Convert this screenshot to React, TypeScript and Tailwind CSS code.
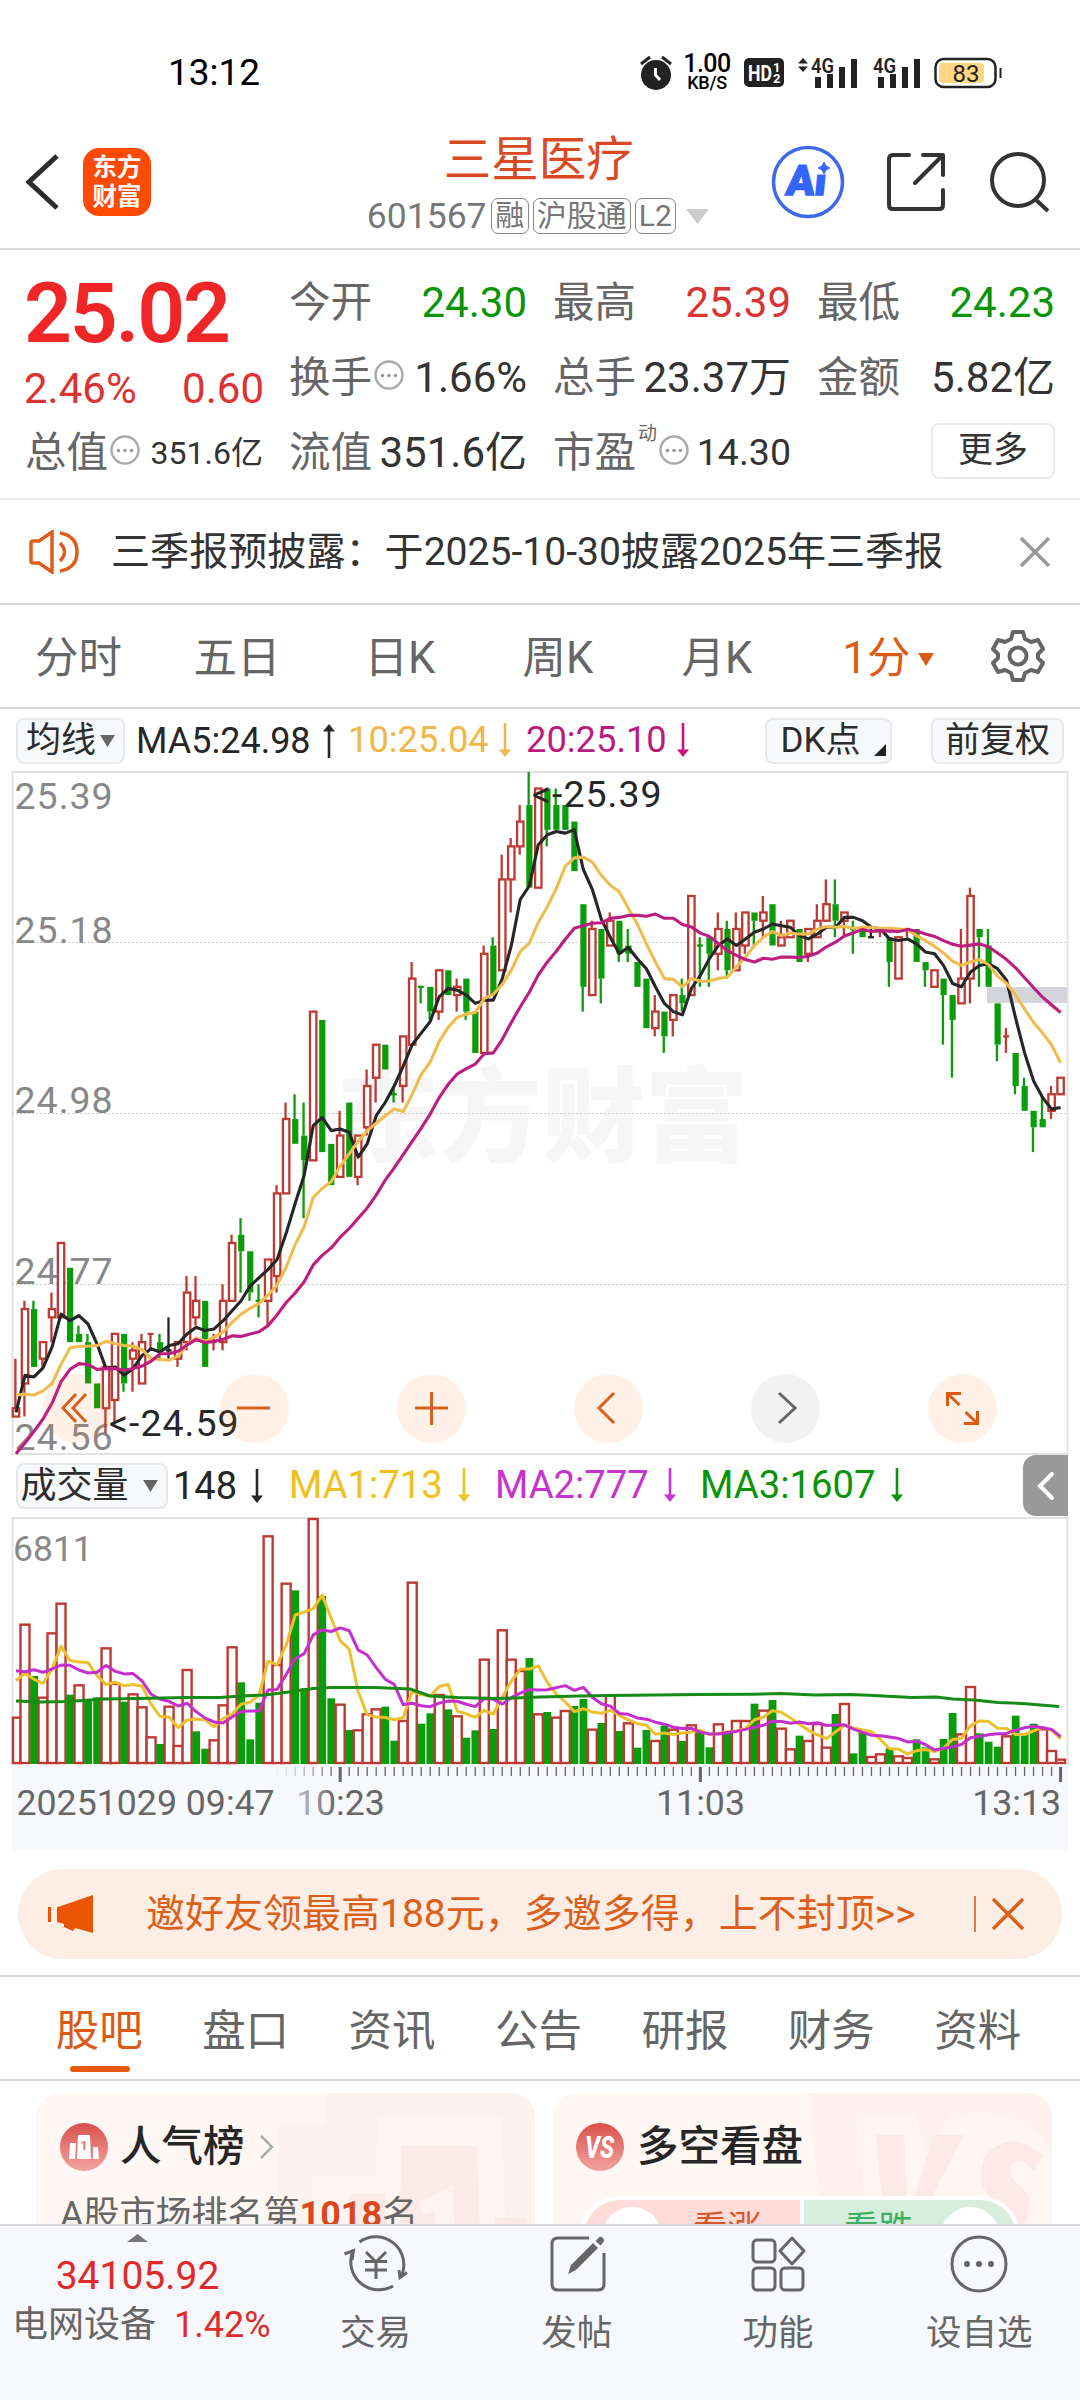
import type { ReactNode } from "react"

type Candle = [string, number, number, number, number]

// Velas: color, máximo, techo y base del cuerpo, mínimo (centavos por debajo de 25.39)
const candles: Candle[] = [
  ["r", 71, 77, 78, 78], ["r", 64, 65, 74, 78], ["g", 64, 65, 72, 72], ["r", 69, 69, 71, 72],
  ["r", 63, 65, 66, 69], ["r", 57, 57, 66, 66], ["g", 60, 60, 69, 69], ["g", 67, 68, 69, 69],
  ["g", 68, 69, 74, 74], ["g", 74, 74, 77, 77], ["r", 72, 72, 77, 80], ["r", 68, 68, 76, 79],
  ["g", 68, 68, 74, 75], ["r", 69, 70, 71, 75], ["r", 68, 69, 74, 74], ["r", 68, 68, 68, 70],
  ["g", 68, 69, 70, 71], ["k", 66, 70, 70, 71], ["r", 69, 69, 71, 72], ["r", 61, 63, 69, 70],
  ["r", 61, 64, 66, 67], ["g", 64, 64, 72, 72], ["r", 68, 69, 69, 70], ["r", 62, 64, 69, 70],
  ["r", 56, 57, 64, 64], ["g", 54, 56, 58, 63], ["g", 58, 58, 63, 64], ["g", 62, 64, 64, 66],
  ["r", 59, 59, 64, 67], ["r", 50, 51, 61, 63], ["r", 40, 42, 51, 51], ["g", 39, 42, 45, 45],
  ["g", 40, 44, 47, 54], ["r", 29, 29, 47, 47], ["g", 30, 30, 46, 46], ["g", 45, 45, 50, 50],
  ["r", 41, 44, 49, 49], ["g", 40, 40, 49, 49], ["r", 44, 44, 49, 50], ["r", 36, 38, 43, 44],
  ["r", 33, 33, 37, 40], ["g", 33, 33, 36, 36], ["g", 38, 39, 39, 40], ["r", 32, 32, 38, 40],
  ["r", 23, 25, 33, 33], ["g", 26, 26, 26, 28], ["g", 26, 26, 29, 30], ["r", 24, 24, 29, 30],
  ["g", 24, 24, 27, 27], ["r", 25, 26, 27, 29], ["g", 25, 25, 29, 30], ["g", 29, 29, 34, 34],
  ["r", 21, 22, 34, 34], ["g", 20, 21, 27, 27], ["r", 10, 13, 24, 24], ["r", 8, 9, 13, 17],
  ["r", 4, 6, 9, 10], ["g", 0, 4, 14, 14], ["r", 2, 2, 14, 14], ["g", 2, 2, 7, 9],
  ["g", 2, 4, 7, 7], ["g", 4, 4, 7, 7], ["g", 6, 6, 12, 12], ["g", 16, 16, 26, 29],
  ["r", 18, 19, 27, 27], ["g", 19, 19, 25, 28], ["r", 17, 18, 21, 21], ["g", 18, 18, 22, 23],
  ["g", 19, 21, 22, 23], ["g", 23, 23, 26, 26], ["g", 25, 25, 31, 31], ["r", 27, 29, 31, 32],
  ["g", 29, 29, 32, 34], ["r", 27, 27, 30, 32], ["g", 25, 27, 28, 29], ["r", 15, 15, 27, 27],
  ["g", 20, 21, 21, 26], ["g", 20, 20, 22, 26], ["r", 17, 19, 22, 24], ["g", 18, 19, 24, 25],
  ["r", 17, 19, 24, 24], ["r", 17, 17, 21, 22], ["g", 17, 17, 18, 21], ["r", 15, 17, 18, 20],
  ["g", 16, 16, 21, 21], ["r", 18, 20, 21, 21], ["r", 18, 18, 20, 20], ["g", 19, 19, 23, 23],
  ["r", 19, 19, 22, 23], ["r", 16, 18, 20, 20], ["r", 13, 16, 18, 18], ["g", 13, 16, 18, 20],
  ["r", 17, 17, 18, 20], ["g", 18, 19, 19, 22], ["g", 19, 19, 20, 20], ["k", 19, 20, 20, 20],
  ["r", 19, 19, 19, 20], ["g", 20, 20, 23, 26], ["r", 20, 20, 25, 25], ["r", 19, 19, 19, 20],
  ["g", 19, 19, 23, 23], ["g", 23, 23, 24, 26], ["r", 24, 24, 26, 26], ["g", 25, 25, 27, 33],
  ["g", 27, 27, 30, 37], ["r", 19, 25, 28, 28], ["r", 14, 15, 25, 28], ["g", 19, 19, 20, 26],
  ["g", 19, 21, 26, 26], ["g", 28, 28, 33, 35], ["r", 31, 32, 32, 34], ["g", 34, 34, 38, 39],
  ["g", 37, 38, 41, 41], ["g", 41, 41, 43, 46], ["g", 39, 42, 43, 43], ["r", 38, 39, 41, 42],
  ["r", 37, 37, 39, 39],
]

const volumes = [
  142, 421, 264, 202, 395, 484, 208, 239, 195, 200, 350, 243, 187, 212, 173, 83, 60, 175, 57, 285,
  98, 46, 74, 179, 353, 245, 74, 184, 686, 300, 544, 521, 227, 738, 504, 197, 181, 102, 104, 152,
  167, 172, 70, 132, 547, 121, 152, 210, 164, 146, 79, 101, 316, 105, 404, 316, 282, 318, 152, 156,
  142, 162, 174, 195, 106, 123, 208, 99, 125, 49, 102, 72, 115, 106, 69, 119, 97, 50, 122, 96,
  132, 132, 181, 163, 192, 109, 47, 85, 72, 123, 52, 150, 183, 32, 95, 24, 32, 47, 26, 21,
  74, 50, 17, 75, 153, 92, 234, 92, 67, 52, 86, 145, 92, 121, 107, 42, 16,
]

const closes = candles.map(([c, , top, bottom]) => (c === "g" ? bottom : top))

const px = (i: number) => 16 + 9.005 * i
const priceY = (k: number) => 772 + k * 8.263
const volY = (v: number) => 1764 - v / 3

// Media móvil; los primeros valores vienen dados porque faltan datos previos
function average(data: number[], n: number, head: number[]) {
  return data.map((_, i) =>
    i < head.length ? head[i] : data.slice(i - n + 1, i + 1).reduce((a, b) => a + b, 0) / n
  )
}

const toPoints = (data: number[], y: (v: number) => number) =>
  data.map((v, i) => `${px(i).toFixed(1)},${y(v).toFixed(1)}`).join(" ")

const ma5 = toPoints(average(closes, 5, [77.5, 73, 73.2, 72.1]), priceY)
const ma10 = toPoints(average(closes, 10, [75.4, 75.3, 75.4, 74.9, 74, 71.7, 69.7, 69.5, 69.5]), priceY)
const ma20 = toPoints(
  average(closes, 20, [
    82.5, 81.2, 79.8, 78.3, 76.4, 73.8, 72.3, 71.6, 71.7, 72.3, 72.2, 72.2, 72.4, 72.2, 71.9, 71.3,
    70.4, 70.4, 70.1,
  ]),
  priceY
)
const vol5 = toPoints(average(volumes, 5, [250, 272, 254, 242]), volY)
const vol10 = toPoints(average(volumes, 10, [280, 277, 283, 275, 285, 297, 296, 282, 273]), volY)
const vol60 =
  "16,1701 41,1702 69,1701.5 103,1699 138,1698.5 186,1697.5 220,1697.5 241,1696 265,1695 289,1692 313,1688.5 331,1687.5 375,1687.5 410,1689 430,1696 458,1697.5 499,1698.5 540,1697 581,1696 609,1695.5 698,1694.5 753,1694.3 781,1693.6 815,1695 850,1694.5 874,1695.5 912,1697.5 936,1697 953,1699 974,1700 998,1702.5 1022,1703.5 1059,1706.5"

const colors: Record<string, string> = { r: "#bd3934", g: "#0a9c0a", k: "#262626" }

function InfoDots() {
  return (
    <svg width="30" height="30" viewBox="0 0 30 30" className="shrink-0 -mt-1.5" fill="none">
      <circle cx="15" cy="15" r="13.5" stroke="#aaa" strokeWidth="2.4" />
      <g fill="#999">
        <circle cx="8.5" cy="15.5" r="1.8" />
        <circle cx="15" cy="15.5" r="1.8" />
        <circle cx="21.5" cy="15.5" r="1.8" />
      </g>
    </svg>
  )
}

function Arrow({ up, color }: { up?: boolean; color: string }) {
  return (
    <svg width="12" height="34" viewBox="0 0 12 34" className={up ? "shrink-0" : "shrink-0 rotate-180"}>
      <path d="M6 4V34" stroke={color} strokeWidth="2.6" />
      <path d="M6 0L12 7.500H0Z" fill={color} />
    </svg>
  )
}

function Triangle({ w, h, color, up }: { w: number; h: number; color: string; up?: boolean }) {
  return (
    <svg width={w} height={h} viewBox="0 0 10 10" preserveAspectRatio="none" className="shrink-0">
      <path d={up ? "M5 0L10 10H0Z" : "M0 0H10L5 10Z"} fill={color} />
    </svg>
  )
}

function StatusBar() {
  return (
    <div className="flex h-[120px] items-center pt-[25px] pl-[168px] text-black">
      <span className="w-[472px] text-[37px] font-[450]">13:12</span>
      <svg width="32" height="36" viewBox="0 0 32 36" fill="none">
        <circle cx="16" cy="20" r="15" fill="#222" />
        <path d="M1 9L10 2M31 9L22 2" stroke="#222" strokeWidth="3" />
        <path d="M15.500 13V20L20 25" stroke="#fff" strokeWidth="3" />
      </svg>
      <div className="ml-3 flex w-[46px] flex-col items-center">
        <span className="text-[25px] leading-[21px] font-medium tracking-[-0.5px]">1.00</span>
        <span className="text-[18px] leading-[18px] font-medium tracking-[-0.3px]">KB/S</span>
      </div>
      <svg width="40" height="29" viewBox="0 0 40 29" className="ml-[14px]" fill="#fff">
        <rect width="40" height="29" rx="5" fill="#222" />
        <text x="4" y="22.500" fontSize="22" fontWeight="700" textLength="24" lengthAdjust="spacingAndGlyphs">HD</text>
        <text x="29" y="13.500" fontSize="13" fontWeight="700">1</text>
        <text x="29" y="25" fontSize="13" fontWeight="700">2</text>
      </svg>
      <svg width="62" height="34" viewBox="0 0 62 34" className="ml-[13px] overflow-visible" fill="#222">
        <path d="M6 2L11 7.500H1ZM6 16L11 10.500H1Z" />
        <text x="14" y="16.500" fontSize="21" fontWeight="600" textLength="23" lengthAdjust="spacingAndGlyphs">4G</text>
        <path d="M18 21h6v11h-6zM30 18h6v14h-6zM42 11h6v21h-6zM54 3h6v29h-6z" />
      </svg>
      <svg width="50" height="34" viewBox="0 0 50 34" className="ml-[14px] overflow-visible" fill="#222">
        <text x="0" y="16.500" fontSize="21" fontWeight="600" textLength="23" lengthAdjust="spacingAndGlyphs">4G</text>
        <path d="M5 21h6v11H5zM17 18h6v14h-6zM29 11h6v21h-6zM41 3h6v29h-6z" />
      </svg>
      <svg width="68" height="32" viewBox="0 0 68 32" className="ml-[11px]" fill="none">
        <rect x="1.500" y="2" width="60" height="28" rx="8" stroke="#222" strokeWidth="2.500" />
        <rect x="5" y="6" width="45" height="20" rx="4" fill="#ffd782" />
        <path d="M66.500 11V21" stroke="#222" strokeWidth="2" />
        <text x="32" y="24.500" fontSize="24" textAnchor="middle" fill="#222">83</text>
      </svg>
    </div>
  )
}

function Header() {
  return (
    <div className="flex h-[130px] items-center border-b-2 border-[#d9d9d9] pl-[26px] pr-[29px]">
      <svg width="34" height="56" viewBox="0 0 34 56" className="-mt-1 shrink-0" fill="none">
        <path d="M31 2L3 28L31 54" stroke="#2c2c2c" strokeWidth="5" />
      </svg>
      <div className="ml-[23px] -mt-1 flex size-[68px] flex-col items-center justify-center rounded-[16px] bg-[#ff4a05] text-[24.500px] leading-[29px] font-bold text-white">
        <span>东方</span>
        <span>财富</span>
      </div>
      <div className="ml-[216px] flex w-[344px] flex-col">
        <div className="-mt-[3px] ml-[77px] text-[47.500px] leading-[58px] text-[#da4a22]">三星医疗</div>
        <div className="mt-[9px] flex items-center text-[35.500px] leading-[36px] text-[#777]">
          <span className="w-[124px]">601567</span>
          <span className="flex h-[36px] w-[38px] items-center justify-center rounded-[7px] border-[1.5px] border-[#888] text-[29px]">融</span>
          <span className="ml-1 flex h-[36px] w-[98px] items-center justify-center rounded-[7px] border-[1.5px] border-[#888] text-[30px]">沪股通</span>
          <span className="mr-[10px] ml-1 flex h-[36px] w-[41px] items-center justify-center rounded-[7px] border-[1.5px] border-[#888] text-[30px]">L2</span>
          <Triangle w={23} h={15} color="#ccc" />
        </div>
      </div>
      <svg width="74" height="74" viewBox="0 0 74 74" className="ml-[61px] -mt-1 shrink-0">
        <circle cx="37" cy="37" r="34.500" fill="none" stroke="#3f68e8" strokeWidth="3.500" />
        <g transform="translate(37 50) skewX(-6)">
          <text x="-23" y="0" fontSize="42" fontWeight="900" fill="#3465ff" stroke="#3465ff" strokeWidth="1.500" textLength="40">Ai</text>
        </g>
        <path d="M45 15H60V29.500H45Z" fill="#fff" />
        <path d="M53 17Q54 22 59 23Q54 24 53 29Q52 24 47 23Q52 22 53 17Z" fill="#3465ff" stroke="#3465ff" />
      </svg>
      <svg width="60" height="60" viewBox="0 0 60 60" className="ml-[41px] -mt-1 shrink-0" fill="none" stroke="#333" strokeWidth="4" strokeLinejoin="round" strokeLinecap="round">
        <path d="M23 3H7Q3 3 3 7V53Q3 57 7 57H53Q57 57 57 53V38M37 3H57V23M56 4L29 31" />
      </svg>
      <svg width="62" height="62" viewBox="0 0 62 62" className="ml-[43px] -mt-1 shrink-0" fill="none" stroke="#333" strokeWidth="4">
        <circle cx="29" cy="29" r="26" />
        <path d="M46 48L59 60" />
      </svg>
    </div>
  )
}

function Quote({ label, value, tone = "text-[#333]", info, sup, size = "text-[42px]" }: {
  label: string
  value: string
  tone?: string
  info?: boolean
  sup?: string
  size?: string
}) {
  return (
    <div className="flex h-[75px] items-center justify-between whitespace-nowrap">
      <div className="flex items-center gap-[2px]">
        <span className="text-[41.500px] text-[#666]">{label}</span>
        {sup && <span className="-mt-[38px] text-[19px] text-[#666]">{sup}</span>}
        {info && <InfoDots />}
      </div>
      <span className={`${size} ${tone}`}>{value}</span>
    </div>
  )
}

function Quotes() {
  return (
    <div className="grid h-[250px] grid-cols-4 gap-x-[26px] border-b-2 border-[#ececec] px-[25px] pt-[15px] leading-none">
      <div>
        <div className="-ml-px flex h-[98px] items-center text-[84px] font-semibold tracking-[-2.200px] text-[#f02626]">25.02</div>
        <div className="-mr-px flex h-[52px] items-center justify-between text-[42px] text-[#dc3232]">
          <span className="-ml-px">2.46%</span>
          <span>0.60</span>
        </div>
        <Quote label="总值" value="351.6亿" info size="text-[32px]" />
      </div>
      <div>
        <Quote label="今开" value="24.30" tone="text-[#0a940a]" />
        <Quote label="换手" value="1.66%" info />
        <Quote label="流值" value="351.6亿" />
      </div>
      <div>
        <Quote label="最高" value="25.39" tone="text-[#d83434]" />
        <Quote label="总手" value="23.37万" />
        <Quote label="市盈" value="14.30" sup="动" info size="text-[37.500px]" />
      </div>
      <div>
        <Quote label="最低" value="24.23" tone="text-[#0a940a]" />
        <Quote label="金额" value="5.82亿" />
        <div className="flex h-[72px] items-center justify-end">
          <div className="flex h-[56px] w-[124px] items-center justify-center rounded-[8px] border-2 border-[#ececec] pb-0.5 text-[35px] text-[#333]">
            更多
          </div>
        </div>
      </div>
    </div>
  )
}

function Notice() {
  return (
    <div className="flex h-[105px] items-center border-b-2 border-[#d9d9d9] pl-[29px] leading-none">
      <svg width="52" height="44" viewBox="0 0 52 44" fill="none" stroke="#dc5f1c" strokeWidth="3.500">
        <path d="M2 13Q2 11 4 11H10L23 2V42L10 33H4Q2 33 2 31Z" />
        <path d="M31 13Q40 22 31 31M31 3Q48 6 48 22T31 41" />
      </svg>
      <span className="ml-[30px] flex-1 pt-0.5 text-[39.100px] whitespace-nowrap text-[#333]">三季报预披露：于2025-10-30披露2025年三季报</span>
      <svg width="32" height="32" viewBox="0 0 32 32" className="mr-[29px]" stroke="#999" strokeWidth="3.500">
        <path d="M2 2L30 30M30 2L2 30" />
      </svg>
    </div>
  )
}

const periods = [
  { label: "分时", width: "w-[157px]" },
  { label: "五日", width: "w-[160px]" },
  { label: "日K",  width: "w-[166px]" },
  { label: "周K",  width: "w-[150px]" },
  { label: "月K",  width: "w-[168px]" },
]

function Periods() {
  return (
    <div className="flex h-[104px] items-center border-b-2 border-[#d9d9d9] text-[43.500px] leading-none text-[#666]">
      {periods.map(({ label, width }) => (
        <div key={label} className={`${width} pt-1.5 text-center`}>{label}</div>
      ))}
      <div className="flex w-[175px] items-center justify-center gap-2 pt-1.5 text-[#dc5a14]">
        1分
        <Triangle w={16} h={13} color="#dc5a14" />
      </div>
      <svg width="54" height="54" viewBox="0 0 54 54" className="ml-[15px]" fill="none" stroke="#666" strokeWidth="4">
        <path d="M22 3H32L34 10L40 13L47 11L52 20L47 25V29L52 34L47 43L40 41L34 44L32 51H22L20 44L14 41L7 43L2 34L7 29V25L2 20L7 11L14 13L20 10Z" strokeLinejoin="round" />
        <circle cx="27" cy="27" r="8.500" />
      </svg>
    </div>
  )
}

function Pill({ children, className }: { children: ReactNode; className: string }) {
  return (
    <div className={`flex h-[46px] shrink-0 items-center justify-center rounded-[8px] border-2 border-[#e6e8ec] bg-[#f7f8fa] text-[35px] text-[#2c2c2c] ${className}`}>
      {children}
    </div>
  )
}

function AverageBar() {
  return (
    <div className="flex h-[63px] items-center pr-4 pl-4 text-[36px] leading-none whitespace-nowrap">
      <Pill className="w-[109px] gap-1">
        均线
        <Triangle w={15} h={12} color="#666" />
      </Pill>
      <div className="ml-[11px] flex w-[197px] items-center gap-[12px] text-[#262626]">
        MA5:24.98 <Arrow up color="#262626" />
      </div>
      <div className="ml-[15px] flex w-[164px] items-center gap-[10px] text-[36.300px] text-[#f0b848]">
        10:25.04 <Arrow color="#f0b848" />
      </div>
      <div className="ml-[14px] flex items-center gap-[10px] text-[36.300px] text-[#b81c80]">
        20:25.10 <Arrow color="#c8147c" />
      </div>
      <Pill className="relative ml-auto w-[127px] pr-4">
        DK点
        <svg width="12" height="12" viewBox="0 0 12 12" className="absolute right-1 bottom-1.5">
          <path d="M12 0V12H0Z" fill="#222" />
        </svg>
      </Pill>
      <Pill className="ml-[39px] w-[133px]">前复权</Pill>
    </div>
  )
}

function CandleShape({ candle, i }: { candle: Candle; i: number }) {
  const [c, high, top, bottom, low] = candle
  const x = px(i)
  const color = colors[c]
  return (
    <g stroke={color} strokeWidth="2.300">
      {high < top && <path d={`M${x - 0.6} ${priceY(high)}V${priceY(top)}`} />}
      {low > bottom && <path d={`M${x - 0.6} ${priceY(bottom)}V${priceY(low)}`} />}
      {top === bottom ? (
        <path d={`M${x - 3.500} ${priceY(top)}H${x + 2.500}`} />
      ) : c === "g" ? (
        <rect x={x - 3} y={priceY(top)} width="6.200" height={priceY(bottom) - priceY(top)} fill={color} stroke="none" />
      ) : (
        <rect x={x - 3.200} y={priceY(top)} width="6.400" height={priceY(bottom) - priceY(top)} fill="#fff" />
      )}
    </g>
  )
}

const controls = [
  { id: "first",  bg: "bg-[#ff6a1a]/10", stroke: "#d6601e", d: "M33 20L20 34L33 48M43 20L30 34L43 48" },
  { id: "minus",  bg: "bg-[#ff6a1a]/10", stroke: "#d6601e", d: "M17 34H50" },
  { id: "plus",   bg: "bg-[#ff6a1a]/10", stroke: "#d6601e", d: "M18 34H51M34.500 18V51" },
  { id: "prev",   bg: "bg-[#ff6a1a]/10", stroke: "#d6601e", d: "M40 19L25 34L40 49" },
  { id: "next",   bg: "bg-[#f2f2f2]",    stroke: "#666",    d: "M28 19L44 34L28 49" },
  { id: "expand", bg: "bg-[#ff6a1a]/10", stroke: "#dc5a14", d: "M19.500 32V19.500H33M19.500 19.500L31.500 31M49.500 37V49.500H36M49.500 49.500L37.500 38" },
]

function PriceChart() {
  return (
    <div className="relative h-[682px]">
      <svg width="1080" height="682" viewBox="0 772 1080 682" fill="none" className="overflow-visible">
        <text x="336" y="1154" fontSize="103" fontWeight="900" fill="#f6f6f6">东方财富</text>
        <rect x="12.500" y="772" width="1055" height="682" stroke="#e2e2e2" strokeWidth="2" />
        {[942.5, 1113.5, 1284.5].map((y) => (
          <path key={y} d={`M12 ${y}H1068`} stroke="#ccc" strokeDasharray="2 2" />
        ))}
        <rect x="987" y="987" width="80" height="16" fill="#d4d6dc" />
        <g fill="#888" fontSize="37.500" letterSpacing="1">
          <text x="14.500" y="809">25.39</text>
          <text x="14.500" y="942.500">25.18</text>
          <text x="14.500" y="1112.500">24.98</text>
          <text x="14.500" y="1283.500">24.77</text>
          <text x="14.500" y="1450">24.56</text>
        </g>
        {candles.map((candle, i) => (
          <CandleShape key={i} candle={candle} i={i} />
        ))}
        <g strokeWidth="3.100" strokeLinejoin="round">
          <polyline points={ma5} stroke="#262626" />
          <polyline points={ma10} stroke="#f0bc50" />
          <polyline points={ma20} stroke="#bd1c80" />
        </g>
        <g fill="#262626" fontSize="37.500" letterSpacing="1">
          <text x="532" y="807">&lt;-25.39</text>
          <text x="109" y="1436">&lt;-24.59</text>
        </g>
      </svg>
      <div className="absolute top-[602px] left-[43px] flex gap-[108px]">
        {controls.map(({ id, bg, stroke, d }) => (
          <div key={id} className={`size-[69px] rounded-full ${bg}`}>
            <svg width="69" height="69" viewBox="0 0 69 69" fill="none">
              <path d={d} stroke={stroke} strokeWidth="3" />
            </svg>
          </div>
        ))}
      </div>
    </div>
  )
}

function VolumeBar() {
  return (
    <div className="flex h-[63px] items-center pr-[12px] pl-[16px] text-[38px] leading-none whitespace-nowrap">
      <Pill className="w-[152px] gap-[14px] pr-1.5 text-[36px]">
        成交量
        <Triangle w={15} h={12} color="#666" />
      </Pill>
      <div className="ml-[5px] flex w-[116px] items-center gap-[14px] text-[#262626]">
        148 <Arrow color="#262626" />
      </div>
      <div className="flex w-[206px] items-center gap-[15px] text-[38.200px] text-[#f0c01c]">
        MA1:713 <Arrow color="#f0c01c" />
      </div>
      <div className="flex w-[205px] items-center gap-[15px] text-[38.200px] text-[#c832d0]">
        MA2:777 <Arrow color="#c832d0" />
      </div>
      <div className="flex items-center gap-[15px] text-[38.300px] text-[#0a940a]">
        MA3:1607 <Arrow color="#0a940a" />
      </div>
      <div className="ml-auto flex h-[61px] w-[45px] items-center justify-center rounded-l-[13px] bg-[#999]">
        <svg width="18" height="30" viewBox="0 0 18 30" fill="none">
          <path d="M15 3L3 15L15 27" stroke="#fff" strokeWidth="4" strokeLinecap="round" />
        </svg>
      </div>
    </div>
  )
}

function VolumeChart() {
  return (
    <svg width="1080" height="334" viewBox="0 1517 1080 334" fill="none" className="block">
      <defs>
        <linearGradient id="axis-fade" x1="0" x2="1" y1="0" y2="0">
          <stop offset="0" stopColor="#f7f8fb" />
          <stop offset="1" stopColor="#f7f8fb" stopOpacity="0" />
        </linearGradient>
      </defs>
      <path d="M12.500 1765V1518H1067.500V1765" stroke="#e2e2e2" strokeWidth="2" />
      <rect x="12" y="1765" width="1056" height="86" fill="#f7f8fb" />
      <text x="13" y="1561" fontSize="35.500" fill="#888">6811</text>
      {volumes.map((v, i) => {
        const up = i === 0 || closes[i] <= closes[i - 1]
        return up ? (
          <rect key={i} x={px(i) - (i ? 4.5 : 3)} y={volY(v) + 1} width={i ? 9 : 7.500} height={v / 3 - 2} fill="#fff" stroke={colors.r} strokeWidth="2.400" />
        ) : (
          <rect key={i} x={px(i) - 3.800} y={volY(v)} width="7.800" height={v / 3} fill={colors.g} />
        )
      })}
      <g strokeWidth="3" strokeLinejoin="round">
        <polyline points={vol5} stroke="#ecc12e" />
        <polyline points={vol10} stroke="#c52fcd" />
        <polyline points={vol60} stroke="#168c16" />
      </g>
      {volumes.map((_, i) => {
        const major = i === 36 || i === 76 || i === 116
        return i > 28 && (
          <path key={i} d={`M${px(i)} 1767V${major ? 1782 : 1776}`} stroke="#666" strokeWidth={major ? 3 : 1.300} />
        )
      })}
      <g fill="#666" fontSize="35.700">
        <text x="296" y="1815">10:23</text>
        <rect x="274" y="1766" width="62" height="60" fill="url(#axis-fade)" />
        <text x="16.500" y="1815">20251029 09:47</text>
        <text x="700.500" y="1815" textAnchor="middle">11:03</text>
        <text x="1061" y="1815" textAnchor="end">13:13</text>
      </g>
    </svg>
  )
}

function Promo() {
  return (
    <div className="mx-[18px] mt-[18px] flex h-[90px] items-center rounded-full bg-[#fceee5] pl-[30px] leading-none text-[#dc5f1c]">
      <svg width="46" height="40" viewBox="0 0 46 40" fill="#ea5504">
        <path d="M0 13H3V28H0ZM10 13L45 1V39L27 34L25 37L16 33V30L9 28V13Z" />
      </svg>
      <span className="ml-[52px] text-[39px] whitespace-nowrap">邀好友领最高188元，多邀多得，上不封顶&gt;&gt;</span>
      <span className="ml-auto h-[36px] w-[2px] bg-[#dc7a44]" />
      <svg width="32" height="32" viewBox="0 0 32 32" className="mr-[38px] ml-[16px]" stroke="#dc5f1c" strokeWidth="3.400">
        <path d="M1 1L31 31M31 1L1 31" />
      </svg>
    </div>
  )
}

const tabs = ["股吧", "盘口", "资讯", "公告", "研报", "财务", "资料"]

function Tabs() {
  return (
    <div className="mt-[16px] grid h-[106px] grid-cols-7 border-y-2 border-[#d9d9d9] pr-[29px] pl-[26px] text-[43.500px] leading-none text-[#666]">
      {tabs.map((tab, i) => (
        <div key={tab} className={`flex flex-col items-center pt-[33px] ${i === 0 ? "text-[#dc5a14]" : ""}`}>
          {tab}
          {i === 0 && <span className="mt-[12px] ml-0.5 h-[6px] w-[60px] rounded-full bg-[#e65a0a]" />}
        </div>
      ))}
    </div>
  )
}

function Cards() {
  return (
    <div className="flex h-[143px] gap-[18px] overflow-hidden px-[36px] pt-[12px] leading-none">
      <div className="relative h-[220px] w-[499px] shrink-0 overflow-hidden rounded-[24px] bg-[#fff7f4] px-[24px] pt-[30px]">
        <svg width="257" height="220" viewBox="-27 0 257 220" className="absolute top-0 right-0">
          <path d="M21 0H230V220H-26V31H21Z" fill="#fef2ef" />
          <path d="M74 24H196L204 220H8V82H70Z" fill="#fff6f3" />
          <path d="M96 53H172L178 220H94ZM45 101H80V220H43ZM190 125H222V220H190Z" fill="#fceae7" />
          <path d="M116 108L148 92L152 220H130V118L116 122Z" fill="#fff4f1" />
        </svg>
        <div className="relative flex items-center">
          <svg width="48" height="48" viewBox="0 0 48 48">
            <defs>
              <linearGradient id="badge" x1="0" x2="0" y1="0" y2="1">
                <stop offset="0" stopColor="#d94f4c" />
                <stop offset="1" stopColor="#f2a59d" />
              </linearGradient>
            </defs>
            <circle cx="24" cy="24" r="24" fill="url(#badge)" />
            <path d="M10 20H16L15 36H9ZM18 12H30L31 36H17ZM33 24H38L39 36H33Z" fill="#fff" />
            <text x="24" y="27" fontSize="13" fontWeight="700" textAnchor="middle" fill="#e07570">1</text>
          </svg>
          <span className="ml-[12px] text-[41.500px] font-medium text-[#262626]">人气榜</span>
          <svg width="14" height="24" viewBox="0 0 14 24" className="ml-[15px]" fill="none">
            <path d="M1 1L12 12L1 23" stroke="#aaa" strokeWidth="2.500" />
          </svg>
        </div>
        <div className="relative mt-[26px] text-[36px] whitespace-nowrap text-[#666]">
          A股市场排名第<span className="font-bold text-[#d9481c]">1018</span>名
        </div>
      </div>
      <div className="relative h-[220px] w-[499px] shrink-0 overflow-hidden rounded-[24px] bg-[#fff7f4] px-[23px] pt-[30px]">
        <svg width="246" height="220" viewBox="0 0 246 220" className="absolute top-0 right-0">
          <path d="M3 0H246V220H24Z" fill="#fef1ee" />
          <path d="M50 22H110L120 60L145 22Q225 10 246 60V220H70Z" fill="#fff5f2" />
          <path d="M70 42H98L102 125L128 42H158L112 130H78ZM236 62Q205 35 180 62Q165 92 192 110Q205 125 190 130H150L145 150H200Q230 130 222 100Q200 85 205 72Q215 62 228 78Z" fill="#fde9e6" />
        </svg>
        <div className="relative flex items-center">
          <svg width="48" height="48" viewBox="0 0 48 48">
            <circle cx="24" cy="24" r="24" fill="url(#badge)" />
            <text x="23.500" y="35" fontSize="31" fontWeight="800" fontStyle="italic" textAnchor="middle" fill="#fff" textLength="29" lengthAdjust="spacingAndGlyphs">VS</text>
          </svg>
          <span className="ml-[13px] text-[41.500px] font-medium text-[#262626]">多空看盘</span>
        </div>
        <div className="relative mt-[25px] ml-[4px] flex h-[80px] w-[440px] overflow-hidden rounded-full border-4 border-white bg-white text-[34.500px]">
          <div className="relative w-[216px] bg-[#ffdcd7] pt-[11px] pl-[109px] text-[#d9562c]">
            <span className="absolute top-[7px] left-[18px] size-[60px] rounded-full bg-white" />
            看涨
          </div>
          <div className="relative ml-1 flex-1 bg-[#d6eedb] pt-[11px] pl-[40px] text-[#3daf62]">
            <span className="absolute top-[7px] right-[16px] size-[60px] rounded-full bg-white" />
            看跌
          </div>
        </div>
      </div>
    </div>
  )
}

const actions = [
  {
    label: "交易",
    icon: (
      <>
        <path d="M15.500 8A28 28 0 0 1 57 43M63 38.500L56 43.500L55 36M49 52A28 28 0 0 1 9 17M0.500 20L9.500 16.500L8 26" />
        <path d="M22 18L32 28L42 18M32 27V45M21 27.500H43M21 36H43" />
      </>
    ),
  },
  {
    label: "发帖",
    icon: (
      <>
        <path d="M44 4H13Q7 4 7 10V50Q7 56 13 56H53Q59 56 59 50V19" />
        <path d="M23 40L26 31L48 9L53 14L31 36ZM50.500 7L54 3.500Q56 2 58 4T58.500 8L55.500 11.500Z" fill="#666" stroke="none" />
      </>
    ),
  },
  {
    label: "功能",
    icon: (
      <>
        <rect x="7" y="6" width="22" height="22" rx="4" />
        <rect x="7" y="34" width="22" height="22" rx="4" />
        <rect x="35" y="34" width="22" height="22" rx="4" />
        <path d="M46 4L58 17L46 30L34 17Z" strokeLinejoin="round" />
      </>
    ),
  },
  {
    label: "设自选",
    icon: (
      <>
        <circle cx="32" cy="30" r="27" />
        <g fill="#666" stroke="none">
          <circle cx="20" cy="30" r="3" />
          <circle cx="32" cy="30" r="3" />
          <circle cx="44" cy="30" r="3" />
        </g>
      </>
    ),
  },
]

function BottomBar() {
  return (
    <div className="flex h-[176px] border-t-2 border-[#d9d9d9] bg-[#f7f8fb] leading-none whitespace-nowrap text-[#666]">
      <div className="flex w-[275px] flex-col items-center pt-[8px]">
        <Triangle w={21} h={8} color="#777" up />
        <span className="mt-[15px] text-[39px] text-[#e02a2a]">34105.92</span>
        <div className="mt-[11px] flex w-full items-center pl-[12px] text-[36px]">
          电网设备
          <span className="ml-[18px] text-[#e02a2a]">1.42%</span>
        </div>
      </div>
      {actions.map(({ label, icon }) => (
        <div key={label} className="flex flex-1 flex-col items-center pt-[8px] text-[35.500px]">
          <svg width="64" height="60" viewBox="0 0 64 60" fill="none" stroke="#666" strokeWidth="3">
            {icon}
          </svg>
          <span className="mt-[22px]">{label}</span>
        </div>
      ))}
    </div>
  )
}

export default function App() {
  return (
    <div className="h-[2400px] w-[1080px] overflow-hidden bg-white font-['Roboto','Noto_Sans_CJK_SC',sans-serif]">
      <StatusBar />
      <Header />
      <Quotes />
      <Notice />
      <Periods />
      <AverageBar />
      <PriceChart />
      <VolumeBar />
      <VolumeChart />
      <Promo />
      <Tabs />
      <Cards />
      <BottomBar />
    </div>
  )
}
